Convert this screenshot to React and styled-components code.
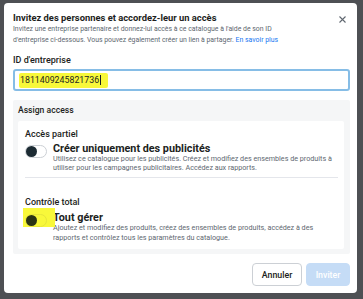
import styled, { createGlobalStyle } from "styled-components";

const GlobalStyle = createGlobalStyle`
  html, body {
    margin: 0;
    padding: 0;
    background: #4e5054;
  }
  body {
    font-family: Roboto, "Liberation Sans", Arial, sans-serif;
    color: #1c1e21;
  }
`;

const Dialog = styled.div`
  box-sizing: border-box;
  margin: 3px 0 0 4px;
  width: 353px;
  height: 290px;
  background: #fff;
  border-radius: 4px;
  padding: 9px 7px 0 9px;
  display: flex;
  flex-direction: column;
`;

const HeaderRow = styled.div`
  display: flex;
  justify-content: space-between;
  align-items: flex-start;
`;

const Title = styled.div`
  font-size: 9.4px;
  line-height: 12px;
  font-weight: 700;
  color: #1c1e21;
`;

const CloseBtn = styled.button`
  border: none;
  background: none;
  padding: 0;
  margin: 3px 4px 0 0;
  width: 8px;
  height: 8px;
  display: flex;
  align-items: center;
  justify-content: center;
  cursor: pointer;
`;

const Subtitle = styled.div`
  font-size: 6.9px;
  line-height: 11px;
  color: #606770;
`;

const Link = styled.a`
  color: #1877f2;
  text-decoration: none;
`;

const Label = styled.div`
  margin-top: 8px;
  font-size: 9px;
  line-height: 12px;
  font-weight: 500;
`;

const InputBox = styled.div`
  box-sizing: border-box;
  margin-top: 3px;
  height: 22px;
  border: 2px solid #86bde6;
  border-radius: 3px;
  display: flex;
  align-items: center;
  padding-left: 4px;
`;

const Highlight = styled.span`
  display: inline-flex;
  align-items: center;
  background: #f8f83a;
  padding: 2px 7px 3px 1px;
  border-radius: 2px;
  font-size: 8.8px;
  color: #1c1e21;
`;

const Caret = styled.span`
  display: inline-block;
  width: 1px;
  height: 10px;
  background: #1c1e21;
  margin-left: 0.5px;
`;

const Panel = styled.div`
  margin-top: 9px;
  background: #f5f6f7;
  border-radius: 2px;
  padding: 4px 6px 5px 5px;
`;

const PanelTitle = styled.div`
  font-size: 8.6px;
  line-height: 12px;
  font-weight: 500;
`;

const Card = styled.div`
  margin-top: 5px;
  background: #fff;
  border-radius: 2px;
  padding: 7px 6px 6px 7px;
`;

const SectionTitle = styled.div`
  font-size: 9px;
  line-height: 12px;
  font-weight: 500;
  margin-top: ${(p) => p.$top || 0}px;
`;

const OptionRow = styled.div`
  display: flex;
  gap: 6px;
  margin-top: ${(p) => p.$top || 0}px;
`;

const ToggleWrap = styled.div`
  flex: none;
  position: relative;
  margin-top: 2px;
`;

const Marker = styled.div`
  position: absolute;
  left: -2px;
  top: -6px;
  width: 32px;
  height: 19px;
  background: #f8f83a;
`;

const Toggle = styled.div`
  position: relative;
  box-sizing: border-box;
  width: 22px;
  height: 13px;
  border-radius: 7px;
  border: 1px solid ${(p) => (p.$marked ? "#e6e63a" : "#ccd0d5")};
  background: ${(p) => (p.$marked ? "#f8f83a" : "#fff")};
  &::after {
    content: "";
    position: absolute;
    left: 0px;
    top: 0px;
    width: 11px;
    height: 11px;
    border-radius: 50%;
    background: ${(p) => (p.$marked ? "#2a3414" : "#1c2b33")};
  }
`;

const OptionText = styled.div`
  display: flex;
  flex-direction: column;
`;

const OptionTitle = styled.div`
  font-size: 10.8px;
  line-height: 11px;
  font-weight: 700;
`;

const OptionDesc = styled.div`
  font-size: 7.2px;
  line-height: ${(p) => p.$lh || 9}px;
  color: #606770;
`;

const Divider = styled.div`
  height: 1px;
  background: #e4e6eb;
  margin-top: 5px;
`;

const Footer = styled.div`
  display: flex;
  justify-content: flex-end;
  gap: 4px;
  margin-top: 9px;
`;

const Button = styled.button`
  box-sizing: border-box;
  height: 23px;
  width: ${(p) => p.$w}px;
  border-radius: 4px;
  font-family: inherit;
  font-size: 8.8px;
  font-weight: 500;
  padding: 0;
  border: 1px solid ${(p) => (p.$primary ? "#c5dcf6" : "#ccd0d5")};
  background: ${(p) => (p.$primary ? "#c5dcf6" : "#fff")};
  color: ${(p) => (p.$primary ? "#fff" : "#1c1e21")};
`;

function App() {
  return (
    <>
      <GlobalStyle />
      <Dialog>
        <HeaderRow>
          <Title>Invitez des personnes et accordez-leur un accès</Title>
          <CloseBtn aria-label="Fermer">
            <svg width="7" height="7" viewBox="0 0 7 7">
              <path d="M0.5 0.5 L6.5 6.5 M6.5 0.5 L0.5 6.5" stroke="#606770" strokeWidth="1.1" />
            </svg>
          </CloseBtn>
        </HeaderRow>
        <Subtitle>
          Invitez une entreprise partenaire et donnez-lui accès à ce catalogue à l'aide de son ID
          <br />
          d'entreprise ci-dessous. Vous pouvez également créer un lien à partager.{" "}
          <Link href="#">En savoir plus</Link>
        </Subtitle>

        <Label>ID d'entreprise</Label>
        <InputBox>
          <Highlight>
            1811409245821736
            <Caret />
          </Highlight>
        </InputBox>

        <Panel>
          <PanelTitle>Assign access</PanelTitle>
          <Card>
            <SectionTitle>Accès partiel</SectionTitle>
            <OptionRow $top={3}>
              <ToggleWrap>
                <Toggle />
              </ToggleWrap>
              <OptionText>
                <OptionTitle>Créer uniquement des publicités</OptionTitle>
                <OptionDesc>
                  Utilisez ce catalogue pour les publicités. Créez et modifiez des ensembles de produits à
                  <br />
                  utiliser pour les campagnes publicitaires. Accédez aux rapports.
                </OptionDesc>
              </OptionText>
            </OptionRow>
            <Divider />
            <SectionTitle $top={18}>Contrôle total</SectionTitle>
            <OptionRow $top={4}>
              <ToggleWrap>
                <Marker />
                <Toggle $marked />
              </ToggleWrap>
              <OptionText>
                <OptionTitle>Tout gérer</OptionTitle>
                <OptionDesc $lh={10}>
                  Ajoutez et modifiez des produits, créez des ensembles de produits, accédez à des
                  <br />
                  rapports et contrôlez tous les paramètres du catalogue.
                </OptionDesc>
              </OptionText>
            </OptionRow>
          </Card>
        </Panel>

        <Footer>
          <Button $w={50}>Annuler</Button>
          <Button $w={44} $primary>
            Inviter
          </Button>
        </Footer>
      </Dialog>
    </>
  );
}

export default App;
